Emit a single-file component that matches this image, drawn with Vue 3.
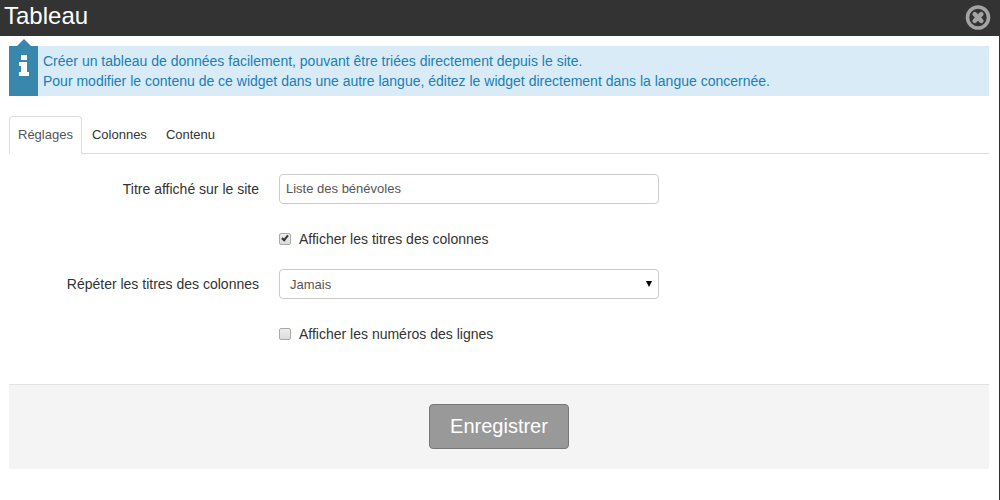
<template>
  <div class="modal">
    <header class="modal-header">
      <h1>Tableau</h1>
      <button type="button" class="close" aria-label="Fermer">
        <svg viewBox="0 0 26 26" width="26" height="26">
          <circle cx="13" cy="12.500" r="10.5" fill="none" stroke="#a3a3a3" stroke-width="3.600" />
          <path d="M9.700 9.200L16.300 15.800M16.300 9.200L9.700 15.800" stroke="#a3a3a3" stroke-width="4.600" stroke-linecap="round" />
        </svg>
      </button>
    </header>

    <div class="modal-body">
      <div class="help">
        <div class="help-icon">
          <svg viewBox="0 0 10 21" width="10" height="21">
            <path d="M2 0h6v5H2zM0 7h8v10h2v4H0v-4h2v-6H0z" fill="#fff" />
          </svg>
        </div>
        <p>
          Créer un tableau de données facilement, pouvant être triées directement depuis le site.<br>
          Pour modifier le contenu de ce widget dans une autre langue, éditez le widget directement dans la langue concernée.
        </p>
      </div>

      <nav class="tabs">
        <a
          v-for="tab in tabs"
          :key="tab.id"
          :href="'#' + tab.id"
          :class="{ active: tab.id === activeTab }"
          @click.prevent="activeTab = tab.id"
        >{{ tab.label }}</a>
      </nav>

      <form @submit.prevent>
        <div class="fields">
          <div class="row">
            <label class="row-label" for="titre">Titre affiché sur le site</label>
            <input id="titre" v-model="titre" type="text" class="control">
          </div>
          <div class="row">
            <label class="check">
              <input v-model="afficherTitres" type="checkbox">
              Afficher les titres des colonnes
            </label>
          </div>
          <div class="row">
            <label class="row-label" for="repeter">Répéter les titres des colonnes</label>
            <div class="select-wrap">
              <select id="repeter" v-model="repeter" class="control">
                <option v-for="option in options" :key="option">{{ option }}</option>
              </select>
              <svg class="arrow" viewBox="0 0 6 6" width="6" height="6">
                <path d="M0 0h6L3 6z" fill="#000" />
              </svg>
            </div>
          </div>
          <div class="row">
            <label class="check">
              <input v-model="afficherNumeros" type="checkbox">
              Afficher les numéros des lignes
            </label>
          </div>
        </div>

        <div class="form-actions">
          <button type="submit" class="save">Enregistrer</button>
        </div>
      </form>
    </div>
  </div>
</template>

<script setup>
import { ref } from 'vue';

const tabs = [
  { id: 'reglages', label: 'Réglages' },
  { id: 'colonnes', label: 'Colonnes' },
  { id: 'contenu', label: 'Contenu' }
];
const activeTab = ref('reglages');

const titre = ref('Liste des bénévoles');
const afficherTitres = ref(true);
const afficherNumeros = ref(false);

const options = ['Jamais', 'Toutes les 10 lignes', 'Toutes les 20 lignes'];
const repeter = ref('Jamais');
</script>

<style>
body {
  margin: 0;
  background: #fff;
}
</style>

<style scoped>
.modal {
  box-sizing: border-box;
  min-height: 100vh;
  border-right: 1px solid #333;
  color: #333;
  font: 14px/20px "Liberation Sans", Arial, sans-serif;
}

.modal-header {
  display: flex;
  align-items: center;
  justify-content: space-between;
  height: 36px;
  padding: 0 8px 0 4px;
  background: #333;
  color: #fff;
}

.modal-header h1 {
  margin: 0;
  padding-bottom: 4px;
  font-size: 24px;
  font-weight: normal;
  line-height: 32px;
}

.close {
  display: block;
  width: 26px;
  height: 26px;
  padding: 0;
  border: 0;
  background: none;
  cursor: pointer;
}

.close svg {
  display: block;
}

.modal-body {
  padding: 10px 10px 0 9px;
}

/* Bandeau d'aide */
.help {
  display: flex;
  background: #d9ebf7;
  color: #1a7fb5;
}

.help-icon {
  position: relative;
  box-sizing: border-box;
  flex: none;
  width: 29px;
  padding: 9px 0 0 10px;
  background: #3a87ad;
}

.help-icon::before {
  content: "";
  position: absolute;
  top: -7px;
  left: 8px;
  border: solid transparent;
  border-width: 0 7px 7px;
  border-bottom-color: #3a87ad;
}

.help-icon svg {
  display: block;
}

.help p {
  margin: 0;
  padding: 5px;
}

/* Onglets */
.tabs {
  display: flex;
  gap: 1px;
  margin-top: 20px;
  border-bottom: 1px solid #ddd;
  font-size: 13px;
}

.tabs a {
  margin-bottom: -1px;
  padding: 8px;
  border: 1px solid transparent;
  border-radius: 4px 4px 0 0;
  color: #333;
  text-decoration: none;
}

.tabs a.active {
  border-color: #ddd #ddd #fff;
  background: #fff;
  color: #555;
}

/* Formulaire */
.fields {
  display: grid;
  gap: 20px;
  padding: 20px 0 40px;
}

.row {
  display: grid;
  grid-template-columns: 250px 380px;
  column-gap: 20px;
  align-items: center;
}

.row-label {
  text-align: right;
}

.control {
  box-sizing: border-box;
  display: block;
  width: 100%;
  height: 30px;
  margin: 0;
  padding: 3px 6px 5px;
  border: 1px solid #ccc;
  border-radius: 4px;
  background: #fff;
  color: #555;
  font: 13px/20px "Liberation Sans", Arial, sans-serif;
}

select.control {
  padding: 5px 10px 3px;
  appearance: none;
}

.select-wrap {
  position: relative;
}

.arrow {
  position: absolute;
  top: 12px;
  right: 7px;
  pointer-events: none;
}

.check {
  grid-column: 2;
  display: flex;
  align-items: center;
  gap: 8px;
  padding-top: 5px;
}

.check input {
  position: relative;
  box-sizing: border-box;
  width: 12px;
  height: 12px;
  margin: 0;
  border: 1px solid #aaa;
  border-radius: 2px;
  background: linear-gradient(#ededed, #dcdcdc);
  appearance: none;
}

.check input:checked::after {
  content: "";
  position: absolute;
  top: 0;
  left: 3px;
  width: 2px;
  height: 5px;
  border: solid #333;
  border-width: 0 2px 2px 0;
  transform: rotate(40deg);
}

.form-actions {
  display: flex;
  justify-content: center;
  padding: 19px 0 20px;
  border-top: 1px solid #e2e2e2;
  background: #f4f4f4;
}

.save {
  padding: 0 20px;
  border: 1px solid #777;
  border-radius: 4px;
  background: #999;
  color: #fff;
  font: 20px/43px "Liberation Sans", Arial, sans-serif;
  cursor: pointer;
}
</style>
